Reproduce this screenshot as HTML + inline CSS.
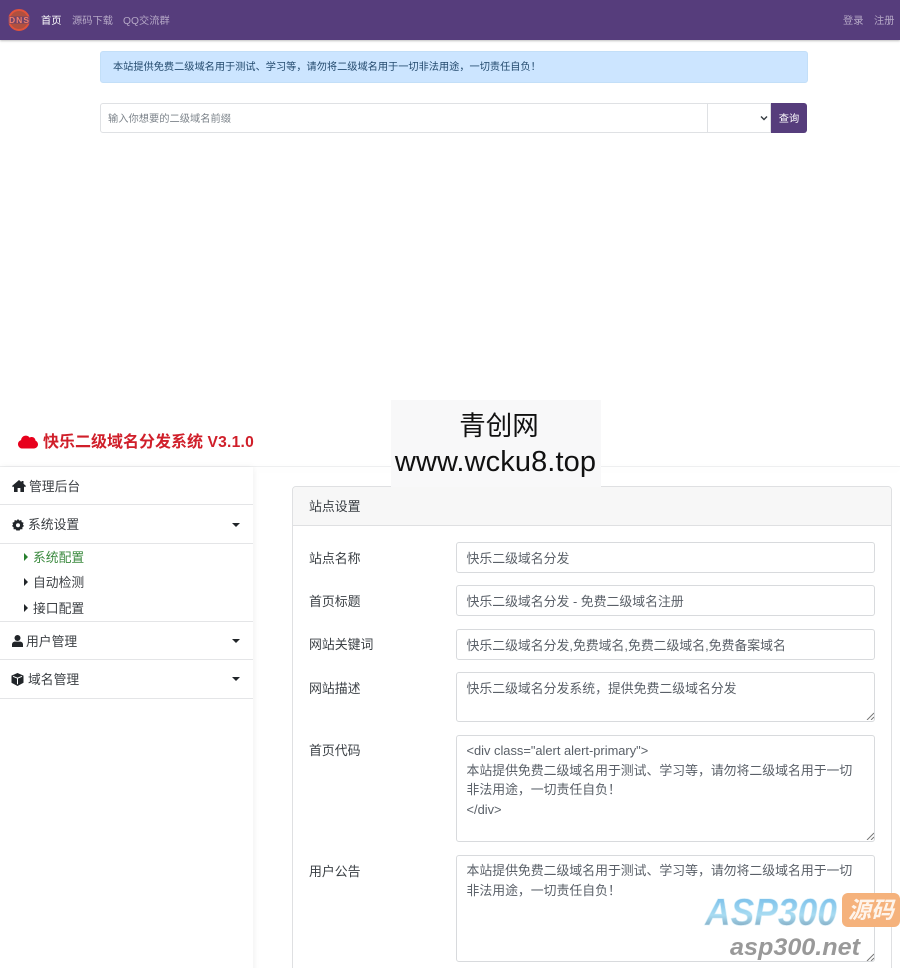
<!DOCTYPE html>
<html lang="zh"><head><meta charset="utf-8"><title>快乐二级域名分发系统</title>
<style>
html,body{margin:0;padding:0;background:#fff;width:900px;height:968px;overflow:hidden}
#wrap{position:absolute;left:0;top:0;width:900px;height:968px;overflow:hidden;font-family:"Liberation Sans","Noto Sans CJK SC",sans-serif;color:#212529;filter:blur(.3px)}
.a{position:absolute;white-space:nowrap}
.nav{font-size:10.25px;line-height:14px;top:14.5px;color:#b5a8c6}
.inp{position:absolute;left:456px;width:417px;background:#fff;border:1px solid #d8dadd;border-radius:3px;font-size:12.87px;color:#5a6068;box-sizing:content-box}
.inp span{position:absolute;left:9.5px;white-space:nowrap}
.lab{position:absolute;left:309px;font-size:12.9px;line-height:18px;color:#3a3f44;white-space:nowrap}
.side{position:absolute;left:0;width:253px;height:1px;background:#e4e5e7}
.sl{position:absolute;font-size:12.8px;line-height:18px;color:#3b3f43;white-space:nowrap}
.car{position:absolute;left:232px;width:0;height:0;border-left:4.5px solid transparent;border-right:4.5px solid transparent;border-top:4.5px solid #212529}
.tri{position:absolute;left:24px;width:0;height:0;border-top:4px solid transparent;border-bottom:4px solid transparent;border-left:4px solid #212529}
.grip{position:absolute;width:8px;height:8px}
</style></head>
<body>
<div id="wrap">
<div class="a" style="left:0;top:0;width:900px;height:40px;background:#563d7c;box-shadow:0 1px 2px rgba(0,0,0,.25)"></div>
<svg class="a" style="left:7px;top:8px" width="24" height="24" viewBox="0 0 24 24"><circle cx="12" cy="12" r="10" fill="#b0503f" stroke="#e2533b" stroke-width="2"/><rect x="0" y="8.5" width="24" height="7" fill="#563d7c" opacity=".7"/><text x="12" y="15.2" text-anchor="middle" font-size="8.5" font-weight="700" fill="#f4806a" font-family="Liberation Sans" textLength="20" lengthAdjust="spacing">DNS</text></svg>
<div class="a nav" style="left:41px;color:#fff">首页</div>
<div class="a nav" style="left:72px">源码下载</div>
<div class="a nav" style="left:123px">QQ交流群</div>
<div class="a nav" style="left:843px">登录</div>
<div class="a nav" style="left:874px">注册</div>

<div class="a" style="left:100px;top:51px;width:706px;height:30px;background:#cce5ff;border:1px solid #c3dff8;border-radius:3px"></div>
<div class="a" style="left:113px;top:60px;font-size:10.2px;line-height:15px;color:#234a6e">本站提供免费二级域名用于测试、学习等，请勿将二级域名用于一切非法用途，一切责任自负！</div>

<div class="a" style="left:100px;top:103px;width:606px;height:28px;border:1px solid #dfe1e4;border-radius:3px 0 0 3px"></div>
<div class="a" style="left:108px;top:113px;font-size:10.25px;line-height:14px;color:#7d848b">输入你想要的二级域名前缀</div>
<div class="a" style="left:707px;top:103px;width:63px;height:28px;border:1px solid #dfe1e4;border-left:0"></div>
<svg class="a" style="left:760px;top:115px" width="8" height="6" viewBox="0 0 8 6"><path d="M1 1.5L4 4.5L7 1.5" fill="none" stroke="#343a40" stroke-width="1.4"/></svg>
<div class="a" style="left:771px;top:103px;width:36px;height:30px;background:#563d7c;border-radius:0 3px 3px 0;color:#fff;font-size:10.25px;line-height:33px;text-align:center">查询</div>

<!-- Admin header -->
<div class="a" style="left:0;top:466px;width:900px;height:1px;background:#eeeff0;box-shadow:0 2px 8px rgba(0,0,0,.07)"></div>
<svg class="a" style="left:18px;top:434px" width="20" height="15" viewBox="0 0 20 15"><path d="M4.5 14.5C2 14.5 0 12.6 0 10.2C0 8.2 1.3 6.6 3.1 6.1C3.2 3.6 5.2 1.6 7.8 1.6C9.4 1.6 10.8 2.4 11.6 3.6C12.2 3.2 13 3 13.8 3C15.8 3 17.4 4.6 17.5 6.6C19 7.3 20 8.8 20 10.4C20 12.7 18.1 14.5 15.8 14.5Z" fill="#e8001c"/></svg>
<div class="a" style="left:43px;top:432px;font-size:16px;line-height:22px;font-weight:700;color:#d01f2a">快乐二级域名分发系统 <span style="font-size:15.6px;letter-spacing:.25px">V3.1.0</span></div>

<!-- Sidebar -->
<div class="a" style="left:0;top:467px;width:253px;height:520px;background:#fff;box-shadow:1px 0 6px rgba(0,0,0,.06)"></div>
<div class="side" style="top:504px"></div>
<div class="side" style="top:543px"></div>
<div class="side" style="top:621px"></div>
<div class="side" style="top:659px"></div>
<div class="side" style="top:698px"></div>
<svg class="a" style="left:12px;top:480px" width="14" height="12" viewBox="0 0 14 12"><path d="M7 0L0 6L1 7.2L2 6.4V12H5.6V8H8.4V12H12V6.4L13 7.2L14 6L11.5 3.8V1H9.5V2.1Z" fill="#212529"/></svg>
<div class="sl" style="left:29px;top:478px">管理后台</div>
<svg class="a" style="left:12px;top:519px" width="12" height="12" viewBox="0 0 12 12"><path d="M6 0L7.3 1.6L9.3 1L9.7 3L11.6 3.7L10.9 5.6L12 7L10.4 8.2L10.4 10.2L8.4 10.2L7 12L6 11L5 12L3.6 10.2L1.6 10.2L1.6 8.2L0 7L1.1 5.6L.4 3.7L2.3 3L2.7 1L4.7 1.6Z" fill="#212529"/><circle cx="6" cy="6.2" r="2" fill="#fff"/></svg>
<div class="sl" style="left:28px;top:516px">系统设置</div>
<div class="car" style="top:523px"></div>
<div class="tri" style="top:553px;border-left-color:#28802f"></div>
<div class="sl" style="left:33px;top:549px;color:#3b8a3f">系统配置</div>
<div class="tri" style="top:578px"></div>
<div class="sl" style="left:33px;top:574px">自动检测</div>
<div class="tri" style="top:604px"></div>
<div class="sl" style="left:33px;top:600px">接口配置</div>
<svg class="a" style="left:12px;top:635px" width="11" height="12" viewBox="0 0 11 12"><circle cx="5.5" cy="3" r="3" fill="#212529"/><path d="M0 12V9.5C0 7.8 1.3 6.6 3 6.6H8C9.7 6.6 11 7.8 11 9.5V12Z" fill="#212529"/></svg>
<div class="sl" style="left:26px;top:633px">用户管理</div>
<div class="car" style="top:639px"></div>
<svg class="a" style="left:11px;top:673px" width="13" height="13" viewBox="0 0 13 13"><path d="M6.5 0L12.5 2.6V9.8L6.5 13L.5 9.8V2.6Z" fill="#212529"/><path d="M2 3.3L6.5 5.2L11 3.3M6.5 5.2V11.2" fill="none" stroke="#fff" stroke-width="1"/></svg>
<div class="sl" style="left:28px;top:671px">域名管理</div>
<div class="car" style="top:677px"></div>

<!-- Card -->
<div class="a" style="left:292px;top:486px;width:598px;height:520px;border:1px solid #dfe0e2;border-radius:4px"></div>
<div class="a" style="left:293px;top:487px;width:598px;height:38px;background:#f7f7f7;border-bottom:1px solid #dfe0e2;border-radius:4px 4px 0 0"></div>
<div class="lab" style="top:498px">站点设置</div>

<div class="lab" style="top:550px">站点名称</div>
<div class="inp" style="top:542px;height:29px;line-height:32px"><span>快乐二级域名分发</span></div>
<div class="lab" style="top:593px">首页标题</div>
<div class="inp" style="top:585px;height:29px;line-height:32px"><span>快乐二级域名分发 - 免费二级域名注册</span></div>
<div class="lab" style="top:636px">网站关键词</div>
<div class="inp" style="top:629px;height:29px;line-height:31px"><span>快乐二级域名分发,免费域名,免费二级域名,免费备案域名</span></div>
<div class="lab" style="top:680px">网站描述</div>
<div class="inp" style="top:672px;height:48px;line-height:20px"><span style="top:6px">快乐二级域名分发系统，提供免费二级域名分发</span></div>
<div class="lab" style="top:742px">首页代码</div>
<div class="inp" style="top:735px;height:105px;line-height:19.5px"><span style="top:5px">&lt;div class="alert alert-primary"&gt;<br>本站提供免费二级域名用于测试、学习等，请勿将二级域名用于一切<br>非法用途，一切责任自负！<br>&lt;/div&gt;</span></div>
<div class="lab" style="top:863px">用户公告</div>
<div class="inp" style="top:855px;height:105px;line-height:19.5px"><span style="top:5px">本站提供免费二级域名用于测试、学习等，请勿将二级域名用于一切<br>非法用途，一切责任自负！</span></div>
<svg class="grip" style="left:866px;top:712px" viewBox="0 0 8 8"><path d="M1 8L8 1M5 8L8 5" stroke="#777" stroke-width="1"/></svg>
<svg class="grip" style="left:866px;top:832px" viewBox="0 0 8 8"><path d="M1 8L8 1M5 8L8 5" stroke="#777" stroke-width="1"/></svg>
<svg class="grip" style="left:866px;top:953px" viewBox="0 0 8 8"><path d="M1 8L8 1M5 8L8 5" stroke="#777" stroke-width="1"/></svg>

<!-- Watermark box -->
<div class="a" style="left:391px;top:400px;width:210px;height:87px;background:#f8f8f9"></div>
<div class="a" style="left:391px;top:406px;width:216px;text-align:center;font-size:26.5px;line-height:40px;color:#111">青创网</div>
<div class="a" style="left:391px;top:443px;width:209px;text-align:center;font-size:29px;line-height:38px;color:#111;letter-spacing:.1px">www.wcku8.top</div>

<!-- ASP300 watermark -->
<svg class="a" style="left:700px;top:888px" width="200" height="74" viewBox="0 0 200 74">
<defs><linearGradient id="g" x1="0" y1="0" x2="0" y2="1"><stop offset="0" stop-color="#6fb8e8"/><stop offset=".55" stop-color="#a8dcf2"/><stop offset="1" stop-color="#6f8fa8"/></linearGradient></defs>
<text x="5" y="37" font-family="Liberation Sans" font-size="38" font-weight="700" font-style="italic" fill="url(#g)" stroke="#d8f0fa" stroke-width=".6" textLength="132" lengthAdjust="spacingAndGlyphs">ASP300</text>
<rect x="142" y="5" width="58" height="34" rx="6" fill="#f5b27c"/>
<text x="171" y="30" text-anchor="middle" font-family="Liberation Sans,Noto Sans CJK SC,sans-serif" font-size="23" font-weight="700" font-style="italic" fill="#fff" fill-opacity=".85">源码</text>
<text x="30" y="67" font-family="Liberation Sans" font-size="24.5" font-weight="700" font-style="italic" fill="#999" textLength="130" lengthAdjust="spacingAndGlyphs">asp300.net</text>
</svg>
</div>
</body></html>
